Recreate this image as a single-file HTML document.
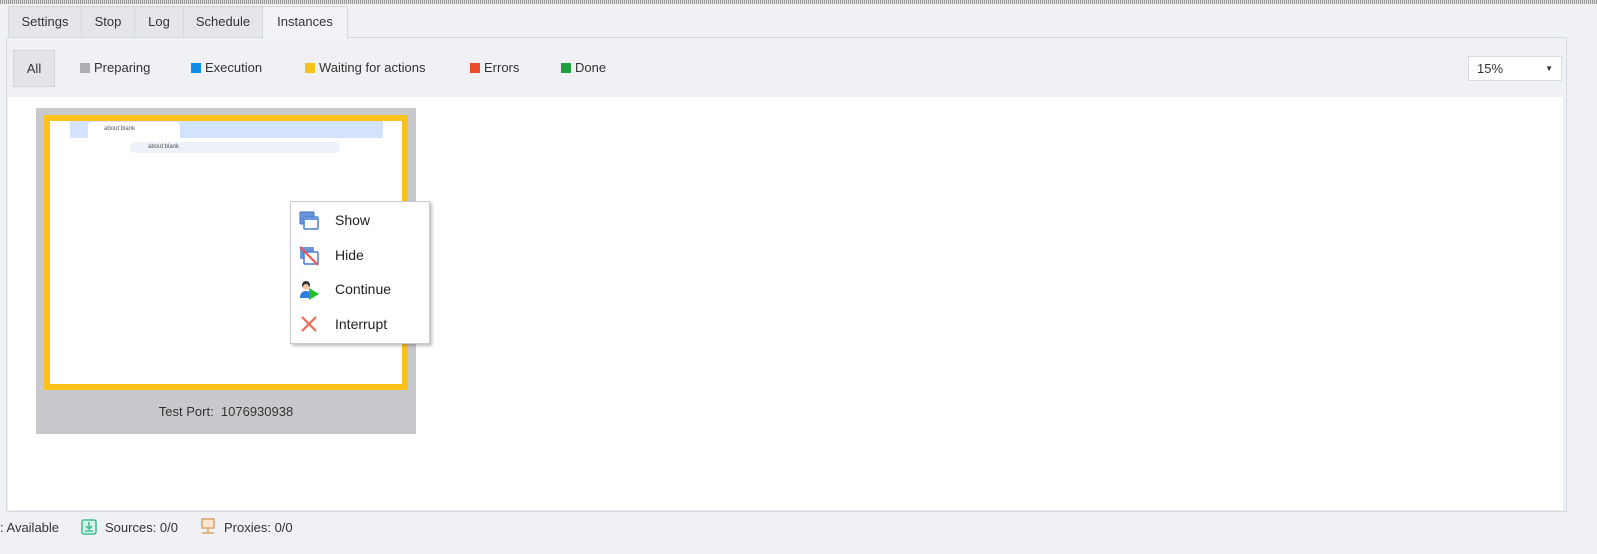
<!DOCTYPE html>
<html><head><style>
*{margin:0;padding:0;box-sizing:border-box}
body{width:1597px;height:554px;background:#eff1f5;font-family:"Liberation Sans",sans-serif;font-size:13px;color:#222;position:relative;overflow:hidden}
.abs{position:absolute}
.tab{position:absolute;top:6px;height:32px;border:1px solid #d5d9e0;background:#e4e6ea;line-height:30px;text-align:center;font-size:13px;color:#333}
.f{position:absolute;top:60px;font-size:13px;color:#333}
.f i{display:inline-block;width:10px;height:10px;margin-right:4px;vertical-align:-1px}
.mi{position:absolute;left:44px;font-size:14px;color:#222}
</style></head><body>
<div class="abs" style="left:0;top:0;width:1597px;height:4px;background:repeating-linear-gradient(90deg,#999 0 1px,#ddd 1px 2px)"></div>
<div class="tab" style="left:8px;width:74px">Settings</div>
<div class="tab" style="left:81px;width:54px">Stop</div>
<div class="tab" style="left:134px;width:50px">Log</div>
<div class="tab" style="left:183px;width:80px">Schedule</div>
<div class="tab" style="left:262px;width:86px;height:33px;background:#f2f3f6;border-bottom:none;z-index:2">Instances</div>
<div class="abs" style="left:6px;top:37px;width:1561px;height:475px;border:1px solid #d5d9e0;background:#eff1f5"></div>
<div class="abs" style="left:13px;top:50px;width:42px;height:37px;background:#e3e4e8;border:1px solid #d3d5da;line-height:35px;text-align:center;color:#333">All</div>
<div class="f" style="left:80px"><i style="background:#aeaeb2"></i>Preparing</div>
<div class="f" style="left:191px"><i style="background:#0f8de8"></i>Execution</div>
<div class="f" style="left:305px"><i style="background:#f7c31b"></i>Waiting for actions</div>
<div class="f" style="left:470px"><i style="background:#ef4a2b"></i>Errors</div>
<div class="f" style="left:561px"><i style="background:#1fa03f"></i>Done</div>
<div class="abs" style="left:1468px;top:56px;width:94px;height:25px;background:#fff;border:1px solid #d8dbe0;padding-left:8px;line-height:23px;color:#333">15%<span style="position:absolute;right:8px;top:0;font-size:8px">▼</span></div>
<div class="abs" style="left:8px;top:97px;width:1555px;height:413px;background:#fff"></div>
<div class="abs" style="left:36px;top:108px;width:380px;height:326px;background:#c8c9cc"></div>
<div class="abs" style="left:44px;top:115px;width:364px;height:275px;border:6px solid #fcc21b;background:#fff"></div>
<div class="abs" style="left:70px;top:121px;width:313px;height:17px;background:#d3e3fd"></div>
<div class="abs" style="left:88px;top:122px;width:92px;height:16px;background:#fff;border-radius:4px 4px 0 0;font-size:6px;color:#555;padding:4px 0 0 16px">about:blank</div>
<div class="abs" style="left:70px;top:138px;width:313px;height:20px;background:#fff"></div>
<div class="abs" style="left:130px;top:142px;width:210px;height:11px;background:#eef1f8;border-radius:6px;font-size:6px;color:#555;padding:2px 0 0 18px">about:blank</div>
<div class="abs" style="left:36px;top:404px;width:380px;text-align:center;color:#333;font-size:13px">Test Port:&nbsp; 1076930938</div>
<div class="abs" style="left:290px;top:201px;width:140px;height:143px;background:#fff;border:1px solid #c5cad3;box-shadow:2px 2px 3px rgba(0,0,0,.25)">
<svg class="abs" style="left:8px;top:9px" width="20" height="20"><rect x="1" y="1" width="14" height="12" rx="1" fill="#6a97dc" stroke="#3d6fc0"/><rect x="5" y="6" width="14" height="12" rx="1" fill="#fff" stroke="#4a7fd0" stroke-width="1.5"/><rect x="5" y="6" width="14" height="3" fill="#6a97dc"/></svg>
<div class="mi" style="top:10px">Show</div>
<svg class="abs" style="left:8px;top:44px" width="20" height="20"><rect x="1" y="1" width="14" height="12" rx="1" fill="#6a97dc"/><rect x="5" y="6" width="14" height="12" rx="1" fill="#fff" stroke="#4a7fd0" stroke-width="1.5"/><line x1="1" y1="1" x2="19" y2="19" stroke="#f05050" stroke-width="2"/></svg>
<div class="mi" style="top:45px">Hide</div>
<svg class="abs" style="left:8px;top:78px" width="22" height="22"><circle cx="7" cy="5" r="4" fill="#333"/><circle cx="7" cy="7" r="3" fill="#f5c9a8"/><path d="M1 18 Q1 11 7 11 Q13 11 13 18Z" fill="#2f7be0"/><path d="M10 8 L20 14 L10 20Z" fill="#1fc22c"/></svg>
<div class="mi" style="top:79px">Continue</div>
<svg class="abs" style="left:9px;top:113px" width="18" height="18"><path d="M2 2 L16 16 M16 2 L2 16" stroke="#ef6a55" stroke-width="2.2"/></svg>
<div class="mi" style="top:114px">Interrupt</div>
</div>
<div class="abs" style="left:0;top:520px;color:#333">: Available</div>
<svg class="abs" style="left:81px;top:519px" width="16" height="16"><rect x="1" y="1" width="14" height="14" rx="2" fill="#d8f3ea" stroke="#3dbb8c" stroke-width="1.5"/><path d="M8 3 V10 M5 7 L8 10 L11 7 M4 12 H12" stroke="#3dbb8c" stroke-width="1.5" fill="none"/></svg>
<div class="abs" style="left:105px;top:520px;color:#333">Sources: 0/0</div>
<svg class="abs" style="left:200px;top:518px" width="16" height="18"><rect x="2" y="1" width="12" height="9" fill="#fbe6cf" stroke="#d9a56a" stroke-width="1.5"/><path d="M8 10 V15 M2 15 H14" stroke="#d9a56a" stroke-width="1.5"/></svg>
<div class="abs" style="left:224px;top:520px;color:#333">Proxies: 0/0</div>
</body></html>
